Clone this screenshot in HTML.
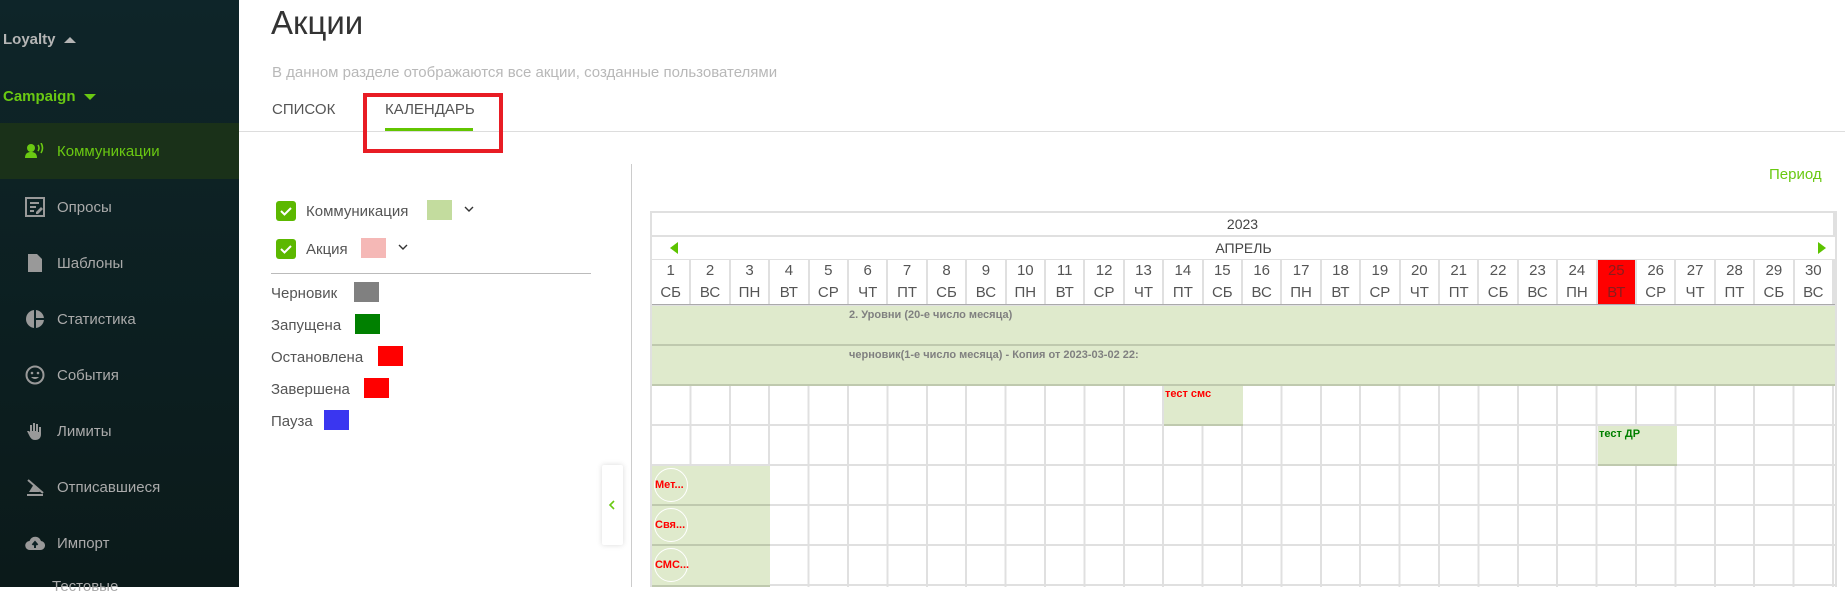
<!DOCTYPE html>
<html><head><meta charset="utf-8"><style>
*{margin:0;padding:0;box-sizing:border-box}
body{width:1845px;height:587px;overflow:hidden;background:#fff;font-family:"Liberation Sans",sans-serif;position:relative}
.abs{position:absolute}
#sb{left:0;top:0;width:239px;height:587px;background:linear-gradient(#0e2529,#0b1a1a)}
.grp{position:absolute;left:3px;font-weight:bold;font-size:15px}
.it{position:absolute;left:0;width:239px;height:56px;display:flex;align-items:center;color:#aaa;font-size:15px}
.it svg{position:absolute;left:25px}
.it span{position:absolute;left:57px}
.act{background:#1a3119;color:#6ac912}
.cell{position:absolute;text-align:center;font-size:15px;color:#555;line-height:22px}
.ev{position:absolute;background:#dfeacc;border-bottom:2px solid #bfc9ae;font-weight:bold;font-size:11px}
.circ{position:absolute;left:2px;top:2px;width:34px;height:34px;border:1px solid #fff;border-radius:50%}
</style></head><body>
<div id="sb" class="abs">
<div class="grp" style="top:31px;color:#b5b5b5">Loyalty <svg width="12" height="8" style="margin-left:4px"><path d="M0 7L6 1l6 6z" fill="#b5b5b5"/></svg></div>
<div class="grp" style="top:88px;color:#6ac912">Campaign <svg width="12" height="8" style="margin-left:4px"><path d="M0 1h12L6 7z" fill="#6ac912"/></svg></div>
<div class="it act" style="top:123px"><svg width="20" height="16" viewBox="0 0 20 16"><circle cx="6" cy="5" r="4" fill="#6ac912"/><path d="M0 15c0-5 3-6 6-6s6 1 6 6z" fill="#6ac912"/><path d="M13 2q2 3 0 6M16 0q3 5 0 10" stroke="#6ac912" stroke-width="1.6" fill="none"/></svg><span>Коммуникации</span></div>
<div class="it" style="top:179px"><svg width="20" height="20" viewBox="0 0 20 20"><rect x="1" y="1" width="18" height="18" fill="none" stroke="#999" stroke-width="2"/><path d="M5 6h9M5 10h6M5 14h4" stroke="#999" stroke-width="2"/><path d="M11 15l5-5 2 2-5 5h-2z" fill="#999"/></svg><span>Опросы</span></div>
<div class="it" style="top:235px"><svg width="20" height="20" viewBox="0 0 20 20"><path d="M3 1h9l5 5v13H3z" fill="#999"/></svg><span>Шаблоны</span></div>
<div class="it" style="top:291px"><svg width="20" height="20" viewBox="0 0 20 20"><circle cx="10" cy="10" r="9" fill="#999"/><path d="M10 0v20M10 10h10" stroke="#0d2225" stroke-width="2"/></svg><span>Статистика</span></div>
<div class="it" style="top:347px"><svg width="20" height="20" viewBox="0 0 20 20"><circle cx="10" cy="10" r="8.5" fill="none" stroke="#999" stroke-width="2"/><circle cx="7" cy="8" r="1.3" fill="#999"/><circle cx="13" cy="8" r="1.3" fill="#999"/><path d="M6 12q4 4 8 0z" fill="#999"/></svg><span>События</span></div>
<div class="it" style="top:403px"><svg width="20" height="20" viewBox="0 0 20 20"><path d="M5 11V4h2v6h1V2h2v8h1V3h2v8h1V6h2v7q0 6-6 6-4 0-6-5l-2-4 2 0z" fill="#999"/></svg><span>Лимиты</span></div>
<div class="it" style="top:459px"><svg width="20" height="20" viewBox="0 0 20 20"><path d="M2 17h16v2H2zM4 15l5-8 6 8z" fill="#999"/><path d="M3 3l15 13" stroke="#999" stroke-width="2"/></svg><span>Отписавшиеся</span></div>
<div class="it" style="top:515px"><svg width="20" height="16" viewBox="0 0 20 16"><path d="M5 15a4.5 4.5 0 0 1-.5-9A6 6 0 0 1 16 6a4.5 4.5 0 0 1-1 9z" fill="#999"/><path d="M10 13V8M7.5 10l2.5-3 2.5 3" stroke="#0d2225" stroke-width="2" fill="none"/></svg><span>Импорт</span></div>
<div class="abs" style="left:52px;top:578px;color:#aaa;font-size:15px">Тестовые</div>
</div>

<div class="abs" style="left:271px;top:4px;font-size:33px;color:#333">Акции</div>
<div class="abs" style="left:272px;top:64px;font-size:15px;color:#b8b8b8">В данном разделе отображаются все акции, созданные пользователями</div>
<div class="abs" style="left:272px;top:101px;font-size:15px;color:#555">СПИСОК</div>
<div class="abs" style="left:385px;top:101px;font-size:15px;color:#555">КАЛЕНДАРЬ</div>
<div class="abs" style="left:385px;top:128px;width:88px;height:3px;background:#62c500"></div>
<div class="abs" style="left:239px;top:131px;width:1606px;height:1px;background:#ddd"></div>
<div class="abs" style="left:363px;top:93px;width:140px;height:60px;border:4px solid #e81c24"></div>

<div class="abs" style="left:631px;top:164px;width:1px;height:423px;background:#ccc"></div>

<div class="abs" style="left:276px;top:201px;width:20px;height:20px;background:#5cb800;border-radius:3px"><svg width="20" height="20"><path d="M5 10l3.5 3.5L15 7" stroke="#fff" stroke-width="2" fill="none"/></svg></div>
<div class="abs" style="left:306px;top:203px;font-size:15px;color:#555">Коммуникация</div>
<div class="abs" style="left:427px;top:200px;width:25px;height:20px;background:#c3dc9e"></div>
<svg class="abs" style="left:464px;top:206px" width="10" height="7"><path d="M1 1l4 4 4-4" stroke="#333" stroke-width="1.4" fill="none"/></svg>
<div class="abs" style="left:276px;top:239px;width:20px;height:20px;background:#5cb800;border-radius:3px"><svg width="20" height="20"><path d="M5 10l3.5 3.5L15 7" stroke="#fff" stroke-width="2" fill="none"/></svg></div>
<div class="abs" style="left:306px;top:241px;font-size:15px;color:#555">Акция</div>
<div class="abs" style="left:361px;top:238px;width:25px;height:20px;background:#f5b8b6"></div>
<svg class="abs" style="left:398px;top:244px" width="10" height="7"><path d="M1 1l4 4 4-4" stroke="#333" stroke-width="1.4" fill="none"/></svg>
<div class="abs" style="left:271px;top:273px;width:320px;height:1px;background:#bbb"></div>
<div class="abs" style="left:271px;top:285px;font-size:15px;color:#555">Черновик</div>
<div class="abs" style="left:354px;top:282px;width:25px;height:20px;background:#808080"></div>
<div class="abs" style="left:271px;top:317px;font-size:15px;color:#555">Запущена</div>
<div class="abs" style="left:355px;top:314px;width:25px;height:20px;background:#008000"></div>
<div class="abs" style="left:271px;top:349px;font-size:15px;color:#555">Остановлена</div>
<div class="abs" style="left:378px;top:346px;width:25px;height:20px;background:#f00"></div>
<div class="abs" style="left:271px;top:381px;font-size:15px;color:#555">Завершена</div>
<div class="abs" style="left:364px;top:378px;width:25px;height:20px;background:#f00"></div>
<div class="abs" style="left:271px;top:413px;font-size:15px;color:#555">Пауза</div>
<div class="abs" style="left:324px;top:410px;width:25px;height:20px;background:#3a36f0"></div>

<div class="abs" style="left:602px;top:465px;width:21px;height:80px;background:#fff;box-shadow:0 0 6px rgba(0,0,0,.15);border-radius:2px"><svg width="21" height="80"><path d="M12 36l-4 4 4 4" stroke="#6ac912" stroke-width="1.6" fill="none"/></svg></div>

<div class="abs" style="left:1769px;top:166px;font-size:15px;color:#6ac912">Период</div>

<div class="abs" style="left:650px;top:211px;width:1187px;height:376px;background:#e0e0e0"></div>
<div class="abs" style="left:652px;top:213px;width:1181px;height:22px;background:#fff;text-align:center;font-size:14px;line-height:22px;color:#444">2023</div>
<div class="abs" style="left:652px;top:237px;width:1183px;height:22px;background:#fff;text-align:center;font-size:14px;line-height:22px;color:#444">АПРЕЛЬ</div>
<div class="abs" style="left:670px;top:242px;width:0;height:0;border-top:6px solid transparent;border-bottom:6px solid transparent;border-right:8px solid #5cc300"></div>
<div class="abs" style="left:1818px;top:242px;width:0;height:0;border-top:6px solid transparent;border-bottom:6px solid transparent;border-left:8px solid #5cc300"></div>
<div id="hdr" class="abs" style="left:652px;top:260px;width:1183px;height:45px;border-bottom:1px solid #aaa;background:#e0e0e0"></div>
<div class="abs" style="left:652px;top:306px;width:1183px;height:40px;background:#dfeacc;border-bottom:2px solid #bfc9ae"></div>
<div class="abs" style="left:849px;top:309px;font-size:11px;font-weight:bold;color:#808080">2. Уровни (20-е число месяца)</div>
<div class="abs" style="left:652px;top:346px;width:1183px;height:40px;background:#dfeacc;border-bottom:2px solid #bfc9ae"></div>
<div class="abs" style="left:849px;top:349px;font-size:11px;font-weight:bold;color:#808080">черновик(1-е число месяца) - Копия от 2023-03-02 22:</div>
<div class="abs" style="left:652px;top:386px;width:1183px;height:201px;background-color:#fff;background-image:repeating-linear-gradient(to right,transparent 0,transparent 37.4px,#e0e0e0 37.4px,#e0e0e0 39.4px),repeating-linear-gradient(to bottom,transparent 0,transparent 38px,#e0e0e0 38px,#e0e0e0 40px)"></div>
<div class="ev" style="left:1164px;top:386px;width:79px;height:40px;color:#f00;padding:2px 1px">тест смс</div>
<div class="ev" style="left:1598px;top:426px;width:79px;height:40px;color:#008000;padding:2px 1px">тест ДР</div>
<div class="ev" style="left:652px;top:466px;width:118px;height:40px;color:#f00"><div class="circ"></div><div style="position:absolute;left:3px;top:13px">Мет...</div></div>
<div class="ev" style="left:652px;top:506px;width:118px;height:40px;color:#f00"><div class="circ"></div><div style="position:absolute;left:3px;top:13px">Свя...</div></div>
<div class="ev" style="left:652px;top:546px;width:118px;height:41px;color:#f00"><div class="circ"></div><div style="position:absolute;left:3px;top:13px">СМС...</div></div>

<script>
var d=["СБ","ВС","ПН","ВТ","СР","ЧТ","ПТ"],h=document.getElementById('hdr'),s='';
for(var i=0;i<30;i++){var red=i==24;s+='<div class="cell" style="left:'+(i*39.4)+'px;top:0;width:37.4px;height:44px;background:'+(red?'#f00':'#fff')+';color:'+(red?'#8a1c1c':'#555')+'">'+(i+1)+'<br>'+d[i%7]+'</div>';}
h.innerHTML=s;
</script>
</body></html>
